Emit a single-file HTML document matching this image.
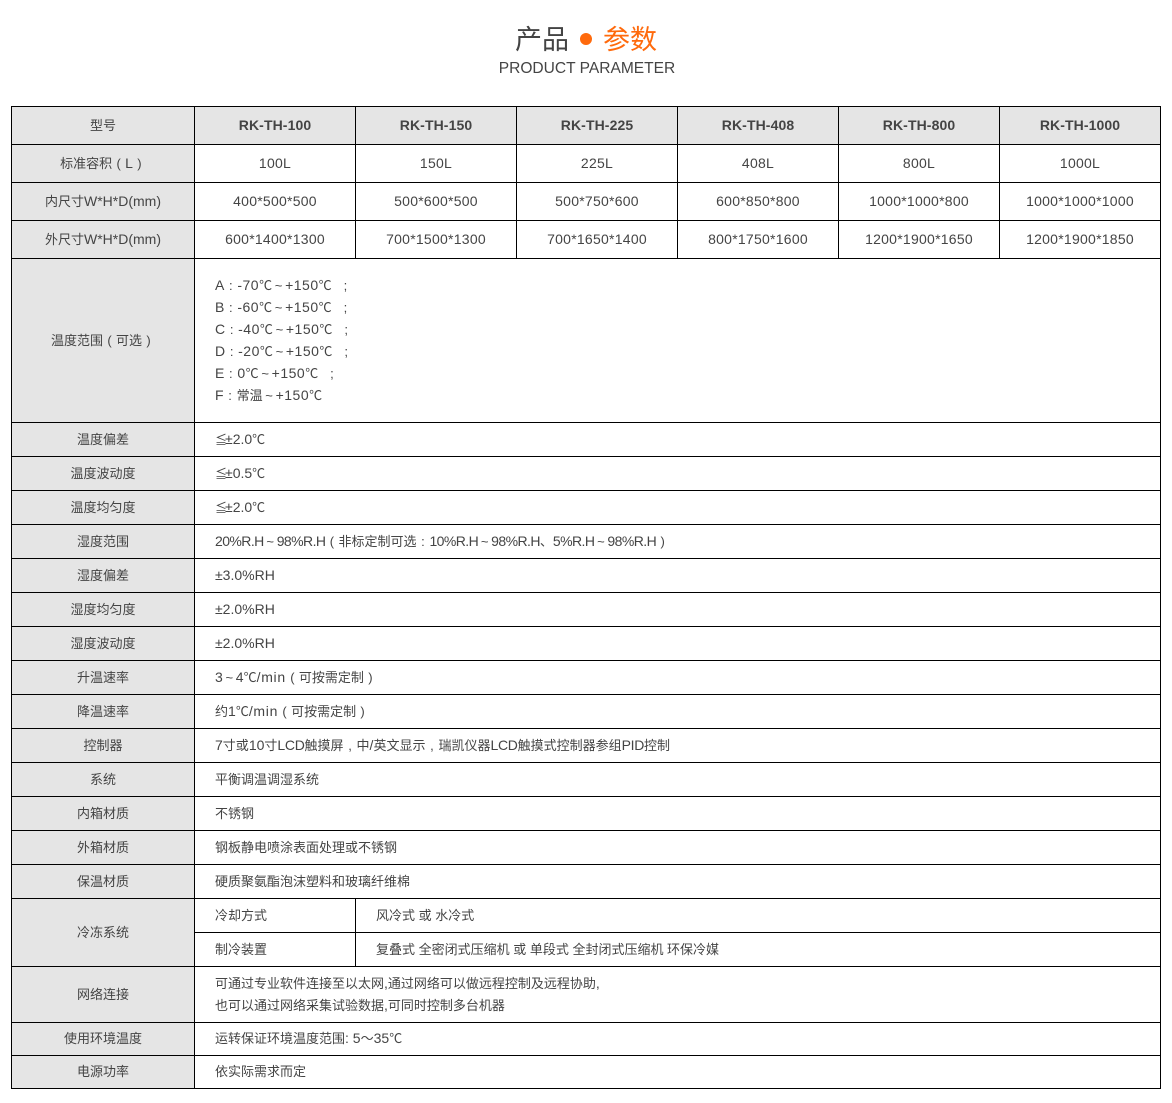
<!DOCTYPE html>
<html lang="zh-CN">
<head>
<meta charset="utf-8">
<title>产品参数</title>
<style>
html,body{margin:0;padding:0;background:#fff;}
body{width:1172px;height:1103px;position:relative;overflow:hidden;color:#444;font-family:"Liberation Sans","Noto Sans CJK SC",sans-serif;font-size:13px;}
.t1{position:absolute;left:515px;top:20px;font-size:27px;line-height:40px;color:#444;white-space:nowrap;}
.t2{position:absolute;left:603px;top:20px;font-size:27px;line-height:40px;color:#ff6a0c;white-space:nowrap;}
.dot{position:absolute;left:580px;top:33px;width:12px;height:12px;border-radius:50%;background:#ff6a0c;}
.sub{position:absolute;left:0;width:1174px;top:59px;text-align:center;font-size:15.55px;line-height:20px;color:#444;white-space:nowrap;}
table{position:absolute;left:11px;top:106px;border-collapse:collapse;table-layout:fixed;width:1149px;}
td{border:1px solid #000;padding:0;text-align:center;vertical-align:middle;white-space:nowrap;line-height:22px;}
td.g{background:#e5e5e5;}
td.x{text-align:left;padding-left:20px;}
i{font-style:normal;font-size:14px;line-height:1;}
i.d{letter-spacing:.25px;}
i.t{letter-spacing:.5px;}
i.n{letter-spacing:-.3px;}
i.m{letter-spacing:-.57px;}
i.k{letter-spacing:.7px;}
b{font-size:14px;font-weight:bold;line-height:1;letter-spacing:.1px;}
u{text-decoration:none;display:inline-block;width:13px;text-align:center;line-height:1;}
s{text-decoration:none;font-size:12px;letter-spacing:-2px;line-height:1;}
</style>
</head>
<body>
<div class="t1">产品</div>
<div class="dot"></div>
<div class="t2">参数</div>
<div class="sub">PRODUCT PARAMETER</div>
<table>
<colgroup><col style="width:183px"><col style="width:161px"><col style="width:161px"><col style="width:161px"><col style="width:161px"><col style="width:161px"><col style="width:161px"></colgroup>
<tr style="height:38px"><td class="g">型号</td><td class="g"><b>RK-TH-100</b></td><td class="g"><b>RK-TH-150</b></td><td class="g"><b>RK-TH-225</b></td><td class="g"><b>RK-TH-408</b></td><td class="g"><b>RK-TH-800</b></td><td class="g"><b>RK-TH-1000</b></td></tr>
<tr style="height:38px"><td class="g">标准容积<u>(</u><i>L</i><u>)</u></td><td><i class="d">100L</i></td><td><i class="d">150L</i></td><td><i class="d">225L</i></td><td><i class="d">408L</i></td><td><i class="d">800L</i></td><td><i class="d">1000L</i></td></tr>
<tr style="height:38px"><td class="g">内尺寸<i>W*H*D(mm)</i></td><td><i class="d">400*500*500</i></td><td><i class="d">500*600*500</i></td><td><i class="d">500*750*600</i></td><td><i class="d">600*850*800</i></td><td><i class="d">1000*1000*800</i></td><td><i class="d">1000*1000*1000</i></td></tr>
<tr style="height:38px"><td class="g">外尺寸<i>W*H*D(mm)</i></td><td><i class="d">600*1400*1300</i></td><td><i class="d">700*1500*1300</i></td><td><i class="d">700*1650*1400</i></td><td><i class="d">800*1750*1600</i></td><td><i class="d">1200*1900*1650</i></td><td><i class="d">1200*1900*1850</i></td></tr>
<tr style="height:164px"><td class="g">温度范围<u>(</u>可选<u>)</u></td><td class="x" colspan="6"><i>A</i><u>:</u><i class="t">-70</i>℃<u>~</u><i class="t">+150</i>℃ &nbsp;<u>;</u><br><i>B</i><u>:</u><i class="t">-60</i>℃<u>~</u><i class="t">+150</i>℃ &nbsp;<u>;</u><br><i>C</i><u>:</u><i class="t">-40</i>℃<u>~</u><i class="t">+150</i>℃ &nbsp;<u>;</u><br><i>D</i><u>:</u><i class="t">-20</i>℃<u>~</u><i class="t">+150</i>℃ &nbsp;<u>;</u><br><i>E</i><u>:</u><i class="t">0</i>℃<u>~</u><i class="t">+150</i>℃ &nbsp;<u>;</u><br><i>F</i><u>:</u>常温<u>~</u><i class="t">+150</i>℃</td></tr>
<tr style="height:34px"><td class="g">温度偏差</td><td class="x" colspan="6"><s>≦</s><i>±2.0</i>℃</td></tr>
<tr style="height:34px"><td class="g">温度波动度</td><td class="x" colspan="6"><s>≦</s><i>±0.5</i>℃</td></tr>
<tr style="height:34px"><td class="g">温度均匀度</td><td class="x" colspan="6"><s>≦</s><i>±2.0</i>℃</td></tr>
<tr style="height:34px"><td class="g">湿度范围</td><td class="x" colspan="6"><i class="m">20%R.H</i><u>~</u><i class="m">98%R.H</i><u>(</u>非标定制可选<u>:</u><i class="m">10%R.H</i><u>~</u><i class="m">98%R.H</i>、<i class="m">5%R.H</i><u>~</u><i class="m">98%R.H</i><u>)</u></td></tr>
<tr style="height:34px"><td class="g">湿度偏差</td><td class="x" colspan="6"><i>±3.0%RH</i></td></tr>
<tr style="height:34px"><td class="g">湿度均匀度</td><td class="x" colspan="6"><i>±2.0%RH</i></td></tr>
<tr style="height:34px"><td class="g">湿度波动度</td><td class="x" colspan="6"><i>±2.0%RH</i></td></tr>
<tr style="height:34px"><td class="g">升温速率</td><td class="x" colspan="6"><i>3</i><u>~</u><i>4</i>℃<i class="k">/min</i><u>(</u>可按需定制<u>)</u></td></tr>
<tr style="height:34px"><td class="g">降温速率</td><td class="x" colspan="6">约<i>1</i>℃<i class="k">/min</i><u>(</u>可按需定制<u>)</u></td></tr>
<tr style="height:34px"><td class="g">控制器</td><td class="x" colspan="6"><i>7</i>寸或<i>10</i>寸<i class="n">LCD</i>触摸屏<u>,</u>中<i>/</i>英文显示<u>,</u>瑞凯仪器<i class="n">LCD</i>触摸式控制器参组<i class="n">PID</i>控制</td></tr>
<tr style="height:34px"><td class="g">系统</td><td class="x" colspan="6">平衡调温调湿系统</td></tr>
<tr style="height:34px"><td class="g">内箱材质</td><td class="x" colspan="6">不锈钢</td></tr>
<tr style="height:34px"><td class="g">外箱材质</td><td class="x" colspan="6">钢板静电喷涂表面处理或不锈钢</td></tr>
<tr style="height:34px"><td class="g">保温材质</td><td class="x" colspan="6">硬质聚氨酯泡沫塑料和玻璃纤维棉</td></tr>
<tr style="height:34px"><td class="g" rowspan="2">冷冻系统</td><td class="x">冷却方式</td><td class="x" colspan="5">风冷式 或 水冷式</td></tr>
<tr style="height:34px"><td class="x">制冷装置</td><td class="x" colspan="5">复叠式 全密闭式压缩机 或 单段式 全封闭式压缩机 环保冷媒</td></tr>
<tr style="height:56px"><td class="g">网络连接</td><td class="x" colspan="6">可通过专业软件连接至以太网<i>,</i>通过网络可以做远程控制及远程协助<i>,</i><br>也可以通过网络采集试验数据<i>,</i>可同时控制多台机器</td></tr>
<tr style="height:33px"><td class="g">使用环境温度</td><td class="x" colspan="6">运转保证环境温度范围<i>: 5</i>～<i>35</i>℃</td></tr>
<tr style="height:33px"><td class="g">电源功率</td><td class="x" colspan="6">依实际需求而定</td></tr>
</table>
</body>
</html>
